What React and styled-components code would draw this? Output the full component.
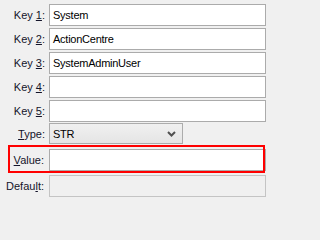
import React from "react";
import styled, { createGlobalStyle } from "styled-components";

const Global = createGlobalStyle`
  html, body { margin: 0; padding: 0; background: #f0f0f0; }
  body { width: 266px; height: 202px; overflow: hidden; }
`;

const Form = styled.div`
  position: relative;
  width: 266px;
  height: 202px;
  box-sizing: border-box;
  padding-top: 4px;
  display: flex;
  flex-direction: column;
  font-family: "Liberation Sans", Arial, sans-serif;
  font-size: 11px;
  color: #000;
`;

const Row = styled.div`
  display: grid;
  grid-template-columns: 45px 1fr;
  column-gap: 4px;
  align-items: center;
  height: ${(p) => p.$h || 22}px;
  margin-top: ${(p) => p.$mt || 0}px;
`;

const Label = styled.label`
  text-align: right;
  color: #14142a;
  white-space: nowrap;
  padding-right: ${(p) => p.$pr || 0}px;
  & u {
    text-decoration: underline;
    text-underline-offset: 1px;
  }
`;

const TextBox = styled.div`
  box-sizing: border-box;
  height: 100%;
  border: 1px solid #ababab;
  background: ${(p) => (p.$disabled ? "#f0f0f0" : "#ffffff")};
  border-color: ${(p) => (p.$disabled ? "#c4c4c4" : "#ababab")};
  padding-left: 3px;
  display: flex;
  align-items: center;
  color: #000;
  letter-spacing: -0.25px;
`;

const Select = styled.div`
  box-sizing: border-box;
  height: 100%;
  width: 134px;
  border: 1px solid #acacac;
  background: linear-gradient(#f0f0f0, #e5e5e5);
  padding-left: 3px;
  padding-right: 6px;
  display: flex;
  align-items: center;
  justify-content: space-between;
  letter-spacing: -0.25px;
`;

const Highlight = styled.div`
  position: absolute;
  left: 8px;
  top: 145px;
  width: 257px;
  height: 28px;
  box-sizing: border-box;
  border: 2px solid #ff0000;
  pointer-events: none;
`;

const Chevron = () => (
  <svg width="9" height="6" viewBox="0 0 9 6">
    <path d="M1 1 L4.5 4.5 L8 1" fill="none" stroke="#505050" strokeWidth="2" />
  </svg>
);

export default function App() {
  const keys = [
    ["1", "System"],
    ["2", "ActionCentre"],
    ["3", "SystemAdminUser"],
    ["4", ""],
    ["5", ""],
  ];
  return (
    <>
      <Global />
      <Form>
        {keys.map(([n, v], i) => (
          <Row key={n} $mt={i === 0 ? 0 : 2}>
            <Label>
              Key <u>{n}</u>:
            </Label>
            <TextBox>{v}</TextBox>
          </Row>
        ))}
        <Row $mt={1} $h={21}>
          <Label>
            <u>T</u>ype:
          </Label>
          <Select>
            <span>STR</span>
            <Chevron />
          </Select>
        </Row>
        <Row $mt={5}>
          <Label $pr={1}>
            <u>V</u>alue:
          </Label>
          <TextBox />
        </Row>
        <Row $mt={4}>
          <Label $pr={1}>
            Defau<u>l</u>t:
          </Label>
          <TextBox $disabled />
        </Row>
        <Highlight />
      </Form>
    </>
  );
}
